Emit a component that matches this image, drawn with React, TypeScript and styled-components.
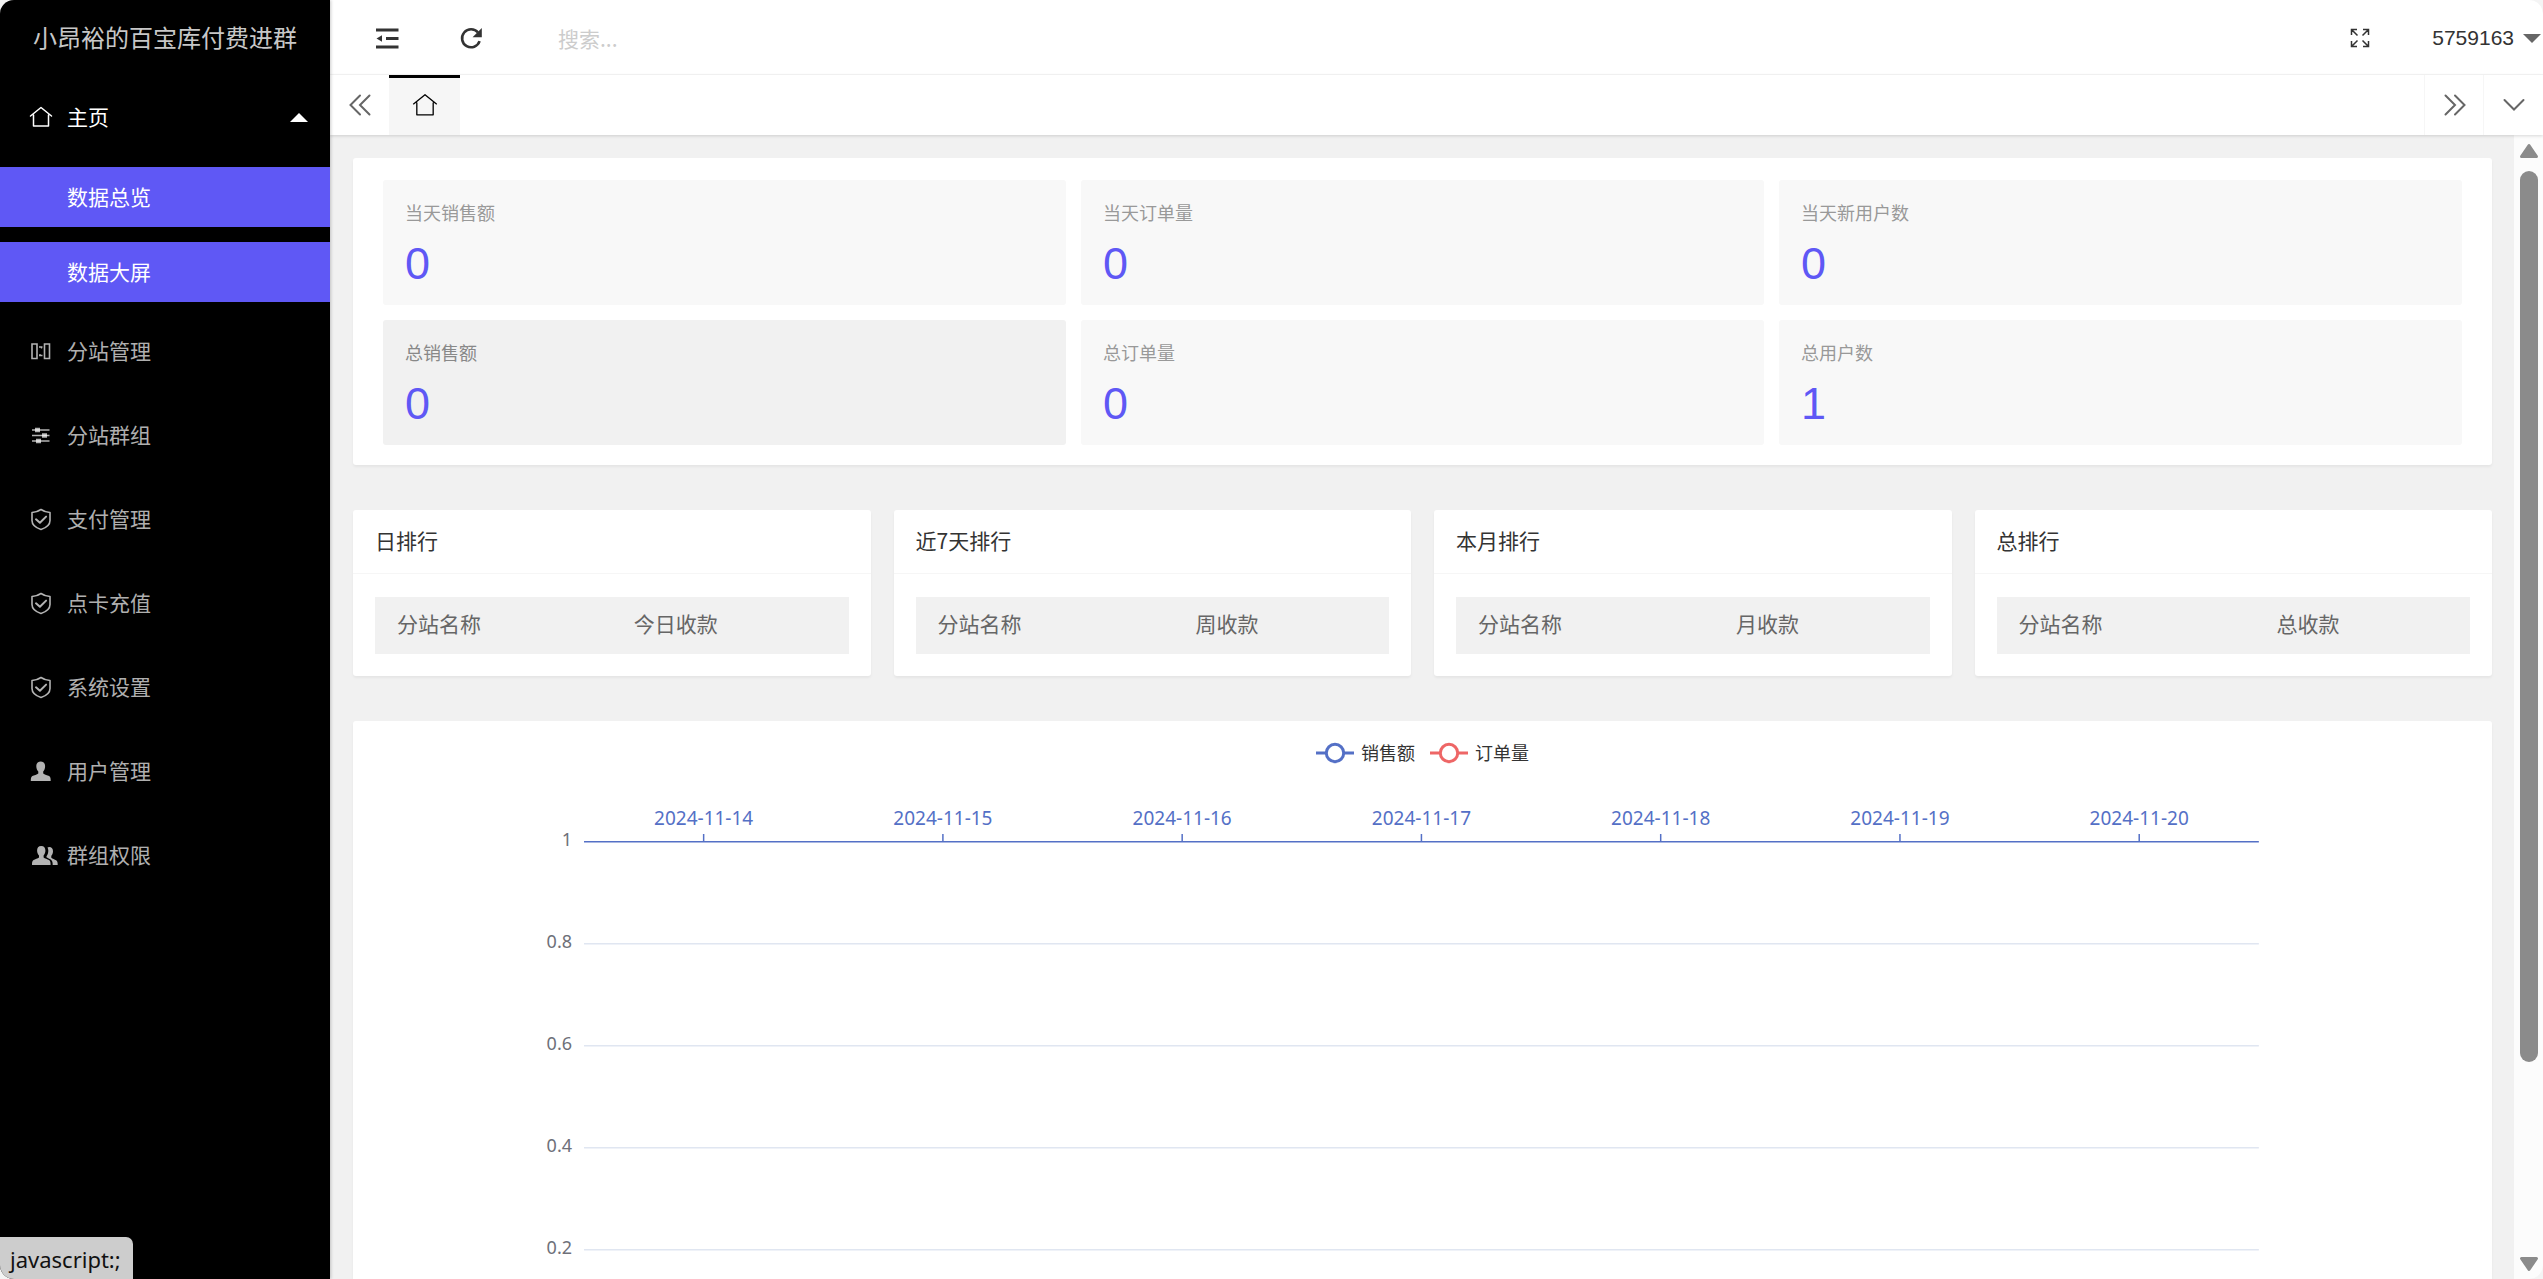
import React, { useState } from 'react';
import styled, { createGlobalStyle } from 'styled-components';

const accent = '#5f58f5';
const axisBlue = '#5470c6';
const seriesRed = '#ee6666';

const GlobalStyle = createGlobalStyle`
  *, *::before, *::after { box-sizing: border-box; }
  html, body { margin: 0; background: #f4f4f4; }
  body {
    color: #333;
    font: 21px/32px "Noto Sans CJK SC", sans-serif;
    font-weight: 400;
  }
  button, input { font: inherit; color: inherit; margin: 0; padding: 0; border: 0; background: none; }
  button { cursor: pointer; }
  a { color: inherit; text-decoration: none; }
  svg { display: block; overflow: visible; flex: none; }
  h1, h2, ul { margin: 0; padding: 0; list-style: none; font-weight: 400; }
`;

const Shell = styled.div`
  display: flex;
  height: 100vh;
  overflow: hidden;
  border-radius: 14px;
  background: #f1f1f1;
`;

/* ---------- sidebar ---------- */

const Sidebar = styled.nav`
  flex: 0 0 330px;
  background: #000;
  color: rgba(255, 255, 255, 0.7);
  box-shadow: 1px 0 3px rgba(0, 0, 0, 0.2);
  z-index: 2;
`;

const Brand = styled.h1`
  height: 75px;
  font-size: 24px;
  line-height: 73px;
  text-align: center;
  color: rgba(255, 255, 255, 0.8);
`;

const MenuLink = styled.a<{ $open?: boolean }>`
  display: flex;
  align-items: center;
  gap: 15px;
  height: 84px;
  padding: 0 22px 0 30px;
  color: ${(p) => (p.$open ? '#fff' : 'inherit')};
`;

const MenuLabel = styled.span`
  flex: 1;
  padding-bottom: 3px;
`;

const SubMenu = styled.ul`
  display: flex;
  flex-direction: column;
  gap: 15px;
  padding: 8px 0 7px;
`;

const SubLink = styled.a`
  display: flex;
  align-items: center;
  height: 60px;
  padding: 0 0 3px 67px;
  background: ${accent};
  color: #fff;
`;

/* ---------- header ---------- */

const Main = styled.div`
  flex: 1;
  min-width: 0;
  display: flex;
  flex-direction: column;
`;

const Header = styled.header`
  display: flex;
  align-items: center;
  flex: 0 0 75px;
  padding: 2px 2px 0 15px;
  background: #fff;
  border-bottom: 1px solid #f6f6f6;
`;

const ToolButton = styled.button`
  display: grid;
  place-items: center;
  width: 84px;
  height: 72px;
`;

const Search = styled.input`
  width: 300px;
  height: 52px;
  margin-left: 45px;
  outline: none;
  &::placeholder { color: #ccc; opacity: 1; }
`;

const Spacer = styled.div`
  flex: 1;
`;

const UserButton = styled.button`
  display: flex;
  align-items: center;
  gap: 9px;
  margin-left: 30px;
  font-family: "Liberation Sans", Arial, sans-serif;
`;

const TabBar = styled.div`
  display: flex;
  flex: 0 0 60px;
  background: #fff;
  box-shadow: 0 1px 3px rgba(0, 0, 0, 0.15);
  z-index: 1;
`;

const TabControl = styled.button<{ $divided?: boolean }>`
  display: grid;
  place-items: center;
  width: 59px;
  box-shadow: ${(p) => (p.$divided ? '-1px 0 0 #f6f6f6' : 'none')};
  color: #666;
`;

const ActiveTab = styled.a`
  display: grid;
  place-items: center;
  width: 71px;
  padding-bottom: 3px;
  background: #f6f6f6;
  border-top: 3px solid #000;
  color: #000;
`;

/* ---------- content ---------- */

const Viewport = styled.div`
  flex: 1;
  min-height: 0;
  display: flex;
`;

const Content = styled.main`
  flex: 1;
  min-width: 0;
  overflow: hidden;
  padding: 23px 22px 0 23px;
`;

const Card = styled.section`
  background: #fff;
  border-radius: 3px;
  box-shadow: 0 2px 3px rgba(0, 0, 0, 0.05);
`;

const StatsCard = styled(Card)`
  display: grid;
  grid-template-columns: repeat(3, 1fr);
  gap: 15px;
  padding: 22px 30px 20px;
  margin-bottom: 45px;
`;

const Stat = styled.a<{ $hover?: boolean }>`
  display: block;
  height: 125px;
  padding: 16px 22px;
  border-radius: 3px;
  background: ${(p) => (p.$hover ? '#f1f1f1' : '#f8f8f8')};
  color: ${(p) => (p.$hover ? '#888' : '#999')};
`;

const StatLabel = styled.span`
  display: block;
  font-size: 18px;
  line-height: 32px;
`;

const StatValue = styled.span`
  display: block;
  font: 45px/71px "Liberation Sans", Arial, sans-serif;
  color: ${accent};
`;

const RankRow = styled.div`
  display: grid;
  grid-template-columns: repeat(4, 1fr);
  gap: 23px;
  margin-bottom: 45px;
`;

const CardTitle = styled.h2`
  height: 64px;
  padding: 0 22px;
  border-bottom: 1px solid #f6f6f6;
  font-size: 21px;
  line-height: 61px;
`;

const CardBody = styled.div`
  padding: 23px 22px 22px;
`;

const RankTable = styled.table`
  width: 100%;
  border-collapse: collapse;
  background: #f1f1f1;
  color: #666;
  th {
    height: 57px;
    padding: 0 22px 5px;
    font-weight: 400;
    text-align: left;
  }
`;

const ChartCard = styled(Card)`
  padding-top: 15px;
`;

const Legend = styled.div`
  display: flex;
  justify-content: center;
  gap: 15px;
`;

const LegendButton = styled.button`
  display: flex;
  align-items: center;
  gap: 7px;
  font-size: 18px;
  line-height: 32px;
`;

const ChartSvg = styled.svg`
  width: 100%;
  height: 640px;
  font: 19px "Noto Sans", "Noto Sans CJK SC", sans-serif;
`;

/* ---------- scroll bar ---------- */

const ScrollTrack = styled.div`
  flex: 0 0 29px;
  display: flex;
  flex-direction: column;
  align-items: center;
  gap: 13px;
  padding: 9px 0 8px;
  background: #fcfcfc;
  color: #8b8b8b;
`;

const ScrollRail = styled.div`
  flex: 1;
  width: 18px;
`;

const ScrollThumb = styled.div`
  height: 83%;
  border-radius: 9px;
  background: #8b8b8b;
`;

const StatusBubble = styled.div`
  position: fixed;
  left: 0;
  bottom: 0;
  z-index: 3;
  height: 42px;
  padding: 0 12px 0 10px;
  border-radius: 0 7px 0 14px;
  background: #cdcdcd;
  color: #111;
  font: 22px/44px "Noto Sans", sans-serif;
`;

/* ---------- icons ---------- */

const HomeIcon = ({ size = 22, stroke = 1.5 }: { size?: number; stroke?: number }) => (
  <svg width={size} height={size} viewBox="0 0 22 22" fill="none" stroke="currentColor" strokeWidth={stroke} strokeLinejoin="round" strokeLinecap="round">
    <path d="M.5 10 11 1.5 21.500 10M3.500 9v11h15V9" />
  </svg>
);

const BoardIcon = () => (
  <svg width="22" height="22" viewBox="0 0 22 22" fill="none" stroke="currentColor" strokeWidth="1.600">
    <path d="M2 4h5v14.500H2zM14.500 4h5v14.500h-5z" />
    <path d="M9 7h3.500M9 15.500h3.500M11.500 7v1.500M10 14v1.500" strokeWidth="1.300" />
  </svg>
);

const SlidersIcon = () => (
  <svg width="22" height="22" viewBox="0 0 22 22" fill="none" stroke="currentColor" strokeWidth="1.700">
    <path d="M2 6h17.500M2 11.500h17.500M2 17h17.500" />
    <path d="M5 6h5M12 11.500h5M6 17h5" strokeWidth="4.400" />
  </svg>
);

const ShieldIcon = () => (
  <svg width="22" height="22" viewBox="0 0 22 22" fill="none" stroke="currentColor" strokeWidth="1.600" strokeLinejoin="round" strokeLinecap="round">
    <path d="M11 1.500c2.400 1.700 5.400 2.800 9 3v8c0 4.300-4.200 7.400-9 8.900-4.800-1.500-9-4.600-9-8.900v-8c3.600-.2 6.600-1.300 9-3z" />
    <path d="m6 11.300 3.900 3.500 6.200-6.200" strokeWidth="2" />
  </svg>
);

const personPath =
  'M10.700 1.500c3 0 4.400 1.900 4.400 4.700 0 2.100-.7 4-1.900 5.200v2c1.300 1.200 4.300 1.800 5.900 2.700 1.300.8 1.600 2.200 1.600 4.900H.8c0-2.700.3-4.100 1.600-4.900 1.600-.9 4.600-1.500 5.900-2.700v-2C7.100 10.200 6.300 8.300 6.300 6.200c0-2.800 1.400-4.700 4.400-4.700z';

const UserIcon = () => (
  <svg width="22" height="22" viewBox="0 0 22 22" fill="currentColor">
    <path d={personPath} />
  </svg>
);

const UsersIcon = () => (
  <svg width="22" height="22" viewBox="0 0 22 22" fill="currentColor">
    <path d="M19.200 3c2.500 0 3.800 1.700 3.800 4.200 0 1.900-.6 3.500-1.700 4.600v1.900c1.200 1.100 3.400 1.700 4.800 2.500 1.300.8 1.600 2.100 1.600 4.800h-5c0-3-.5-4.600-2-5.600-1.200-.8-2.800-1.300-4.200-2.200v-1c1.200-1.500 1.800-3.300 1.800-5.500 0-1.200-.3-2.300-.8-3.200.5-.3 1.100-.5 1.700-.5z" />
    <path d="M11.200 2c2.900 0 4.200 1.800 4.200 4.500 0 2-.7 3.900-1.800 5v2c1.200 1.100 3.900 1.700 5.400 2.600 1.300.8 1.600 2.200 1.600 4.900H2c0-2.700.3-4.100 1.600-4.900 1.500-.9 4.200-1.500 5.400-2.600v-2c-1.200-1.100-1.900-3-1.900-5C7.100 3.800 8.300 2 11.200 2z" />
  </svg>
);

const CollapseIcon = () => (
  <svg width="24" height="22" viewBox="0 0 24 22" fill="none" stroke="currentColor" strokeWidth="2.800">
    <path d="M1 3h22.500M11 11.500h12.500M1 20h22.500" />
    <path d="M1.500 11.500 7 8.200v6.600z" fill="currentColor" stroke="none" />
  </svg>
);

const RefreshIcon = () => (
  <svg width="22" height="22" viewBox="0 0 22 22" fill="none" stroke="currentColor" strokeWidth="2.600">
    <path d="M18 5.500A9 9 0 1 0 19.600 14.200" />
    <path d="M21.800 1v9.300H12.600z" fill="currentColor" stroke="none" />
  </svg>
);

const FullscreenIcon = () => (
  <svg width="20" height="20" viewBox="0 0 20 20" fill="none" stroke="currentColor" strokeWidth="1.500">
    <path d="M1.500 7V1.500H7M1.500 1.500l6 6M13 1.500h5.500V7M18.500 1.500l-6 6M1.500 13v5.500H7M1.500 18.500l6-6M13 18.500h5.500V13M18.500 18.500l-6-6" />
  </svg>
);

const DoubleChevron = ({ back }: { back?: boolean }) => (
  <svg width="22" height="22" viewBox="0 0 22 22" fill="none" stroke="currentColor" strokeWidth="2" strokeLinecap="round">
    <path d={back ? 'M11 1.500 1.500 11l9.500 9.500M20.500 1.500 11 11l9.500 9.500' : 'M1.500 1.500 11 11l-9.500 9.500M11 1.500l9.500 9.500-9.500 9.500'} />
  </svg>
);

const ChevronDown = () => (
  <svg width="22" height="22" viewBox="0 0 22 22" fill="none" stroke="currentColor" strokeWidth="2" strokeLinecap="round">
    <path d="M1.500 6 11 15.500 20.500 6" />
  </svg>
);

const Caret = ({ up, color }: { up?: boolean; color: string }) => (
  <svg width="18" height="9" viewBox="0 0 18 9" fill={color}>
    <path d={up ? 'M0 9 9 0l9 9z' : 'M0 0h18L9 9z'} />
  </svg>
);

const ScrollArrow = ({ up }: { up?: boolean }) => (
  <svg width="18" height="14" viewBox="0 0 18 14" fill="currentColor" stroke="currentColor" strokeWidth="3" strokeLinejoin="round">
    <path d={up ? 'M1.500 12.500 9 1.500l7.500 11z' : 'M1.500 1.500h15L9 12.500z'} />
  </svg>
);

const LegendMark = ({ color }: { color: string }) => (
  <svg width="38" height="20" viewBox="0 0 38 20" stroke={color} strokeWidth="3" fill="#fff">
    <path d="M0 11h38" />
    <circle cx="19" cy="11" r="8.700" />
  </svg>
);

/* ---------- data ---------- */

const menu = [
  { label: '分站管理', icon: <BoardIcon /> },
  { label: '分站群组', icon: <SlidersIcon /> },
  { label: '支付管理', icon: <ShieldIcon /> },
  { label: '点卡充值', icon: <ShieldIcon /> },
  { label: '系统设置', icon: <ShieldIcon /> },
  { label: '用户管理', icon: <UserIcon /> },
  { label: '群组权限', icon: <UsersIcon /> },
];

const stats = [
  { label: '当天销售额', value: 0 },
  { label: '当天订单量', value: 0 },
  { label: '当天新用户数', value: 0 },
  { label: '总销售额', value: 0 },
  { label: '总订单量', value: 0 },
  { label: '总用户数', value: 1 },
];

const ranks = [
  { title: '日排行', amount: '今日收款' },
  { title: '近7天排行', amount: '周收款' },
  { title: '本月排行', amount: '月收款' },
  { title: '总排行', amount: '总收款' },
];

const dates = ['2024-11-14', '2024-11-15', '2024-11-16', '2024-11-17', '2024-11-18', '2024-11-19', '2024-11-20'];
const levels = ['1', '0.8', '0.6', '0.4', '0.2'];

const AXIS_TOP = 74;
const LEVEL_STEP = 102;

const SalesChart = () => (
  <ChartSvg role="img" aria-label="销售额 订单量">
    <svg x="10.8%" width="78.3%" height="640">
      {levels.map((level, i) => {
        const y = AXIS_TOP + i * LEVEL_STEP;
        return (
          <g key={level}>
            <line
              x1="0"
              x2="100%"
              y1={y - 0.25}
              y2={y - 0.25}
              stroke={i === 0 ? axisBlue : '#e0e6f1'}
              strokeWidth="1.500"
            />
            <text x="-12" y={y + 4} fontSize="18" textAnchor="end" fill="#6e7079">{level}</text>
          </g>
        );
      })}
      {dates.map((date, i) => {
        const x = `${((i + 0.5) / dates.length) * 100}%`;
        return (
          <g key={date}>
            <line x1={x} x2={x} y1={AXIS_TOP - 8} y2={AXIS_TOP} stroke={axisBlue} strokeWidth="1.500" />
            <text x={x} y={AXIS_TOP - 17} textAnchor="middle" fill={axisBlue}>{date}</text>
          </g>
        );
      })}
    </svg>
  </ChartSvg>
);

export default function App() {
  const [hovered, setHovered] = useState(3);

  return (
    <>
      <GlobalStyle />
      <Shell>
        <Sidebar>
          <Brand>小昂裕的百宝库付费进群</Brand>
          <ul>
            <li>
              <MenuLink href="#" $open>
                <HomeIcon />
                <MenuLabel>主页</MenuLabel>
                <Caret up color="#fff" />
              </MenuLink>
              <SubMenu>
                <li><SubLink href="#">数据总览</SubLink></li>
                <li><SubLink href="#">数据大屏</SubLink></li>
              </SubMenu>
            </li>
            {menu.map((item) => (
              <li key={item.label}>
                <MenuLink href="#">
                  {item.icon}
                  <MenuLabel>{item.label}</MenuLabel>
                </MenuLink>
              </li>
            ))}
          </ul>
        </Sidebar>

        <Main>
          <Header>
            <ToolButton aria-label="侧边伸缩"><CollapseIcon /></ToolButton>
            <ToolButton aria-label="刷新"><RefreshIcon /></ToolButton>
            <Search type="text" placeholder="搜索..." aria-label="搜索" />
            <Spacer />
            <ToolButton aria-label="全屏"><FullscreenIcon /></ToolButton>
            <UserButton>5759163<Caret color="#666" /></UserButton>
          </Header>

          <TabBar>
            <TabControl aria-label="向左"><DoubleChevron back /></TabControl>
            <ActiveTab href="#" aria-label="主页"><HomeIcon size={24} stroke={1.2} /></ActiveTab>
            <Spacer />
            <TabControl $divided aria-label="向右"><DoubleChevron /></TabControl>
            <TabControl $divided aria-label="更多"><ChevronDown /></TabControl>
          </TabBar>

          <Viewport>
            <Content>
              <StatsCard>
                {stats.map((stat, i) => (
                  <Stat key={stat.label} href="#" $hover={i === hovered} onMouseEnter={() => setHovered(i)}>
                    <StatLabel>{stat.label}</StatLabel>
                    <StatValue>{stat.value}</StatValue>
                  </Stat>
                ))}
              </StatsCard>

              <RankRow>
                {ranks.map((rank) => (
                  <Card key={rank.title}>
                    <CardTitle>{rank.title}</CardTitle>
                    <CardBody>
                      <RankTable>
                        <thead>
                          <tr>
                            <th scope="col">分站名称</th>
                            <th scope="col">{rank.amount}</th>
                          </tr>
                        </thead>
                      </RankTable>
                    </CardBody>
                  </Card>
                ))}
              </RankRow>

              <ChartCard>
                <Legend>
                  <LegendButton><LegendMark color={axisBlue} />销售额</LegendButton>
                  <LegendButton><LegendMark color={seriesRed} />订单量</LegendButton>
                </Legend>
                <SalesChart />
              </ChartCard>
            </Content>

            <ScrollTrack aria-hidden="true">
              <ScrollArrow up />
              <ScrollRail><ScrollThumb /></ScrollRail>
              <ScrollArrow />
            </ScrollTrack>
          </Viewport>
        </Main>
      </Shell>
      <StatusBubble>javascript:;</StatusBubble>
    </>
  );
}
